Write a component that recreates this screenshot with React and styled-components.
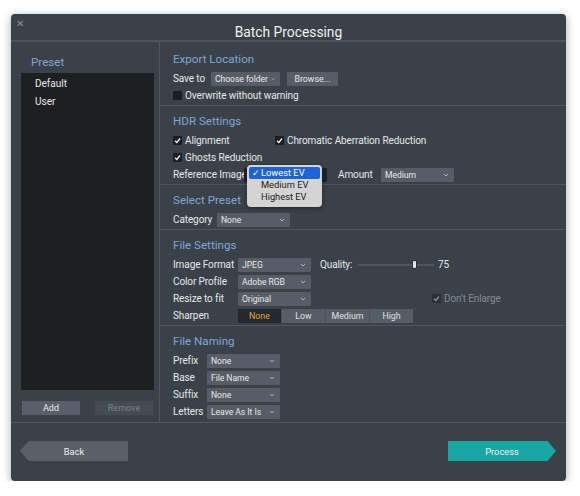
import React from 'react';
import styled, { createGlobalStyle } from 'styled-components';

const GlobalStyle = createGlobalStyle`
    body {
        margin: 0;
        background: #ffffff;
        font-family: Roboto, "Liberation Sans", sans-serif;
    }
`;

const Window = styled.div`
    margin: 14px 0 0 11px;
    width: 555px;
    height: 467px;
    background-color: #3b4149;
    border-radius: 4px;
    box-shadow: 0 2px 8px rgba(0, 0, 0, 0.35);
    display: flex;
    flex-direction: column;
    position: relative;
    overflow: hidden;
    color: #e4e6e8;
`;

const TitleBar = styled.div`
    height: 28px;
    border-bottom: 2px solid #4e545c;
    display: flex;
    align-items: center;
    justify-content: center;
    position: relative;
    padding-top: 9px;
    box-sizing: border-box;
    font-size: 13.8px;
    color: #f0f0f0;
`;

const CloseX = styled.span`
    position: absolute;
    left: 5px;
    top: 4px;
    font-size: 10px;
    color: #8d9299;
`;

const Body = styled.div`
    height: 380px;
    display: flex;
    border-bottom: 1px solid #50565e;
`;

const LeftPanel = styled.div`
    width: 149px;
    border-right: 1px solid #50565e;
    padding: 12px 5px 0 10px;
    display: flex;
    flex-direction: column;
    box-sizing: border-box;
`;

const SectionTitle = styled.div`
    font-size: 11.6px;
    line-height: 16px;
    color: #7fa7d6;
    margin: 0 0 ${p => p.$mb || 3}px ${p => p.$ml || 0}px;
`;

const PresetList = styled.ul`
    list-style: none;
    margin: 0;
    padding: 1px 0 0;
    height: 316px;
    background-color: #1e1f21;
`;

const PresetItem = styled.li`
    height: 18px;
    line-height: 19px;
    padding-left: 14px;
    font-size: 10px;
    color: #e8e8e8;
`;

const ListButtons = styled.div`
    display: flex;
    justify-content: space-between;
    padding: 11px 1px 0 1px;
`;

const FlatButton = styled.button`
    width: 58px;
    height: 14px;
    border: none;
    padding: 0;
    font-family: inherit;
    font-size: 9px;
    background-color: ${p => (p.$disabled ? '#454b53' : '#59606a')};
    color: ${p => (p.$disabled ? '#7d838a' : '#e8e8e8')};
`;

const RightPanel = styled.div`
    flex: 1;
    display: flex;
    flex-direction: column;
    padding-top: 2px;
`;

const Section = styled.div`
    padding: 7px 12px 1px 13px;
    border-bottom: ${p => (p.$last ? 'none' : '1px solid #50565e')};
    position: relative;
`;

const Row = styled.div`
    height: 17px;
    display: flex;
    align-items: center;
    font-size: 10px;
    letter-spacing: -0.1px;
    color: #e6e8ea;
    white-space: nowrap;
`;

const Label = styled.span`
    width: ${p => p.$w}px;
    margin-left: ${p => p.$ml || 0}px;
    flex-shrink: 0;
    white-space: nowrap;
`;

const SelectBox = styled.div`
    width: ${p => p.$w || 73}px;
    height: 14px;
    box-sizing: border-box;
    background-color: ${p => (p.$dark ? '#1f2328' : '#575d66')};
    border-radius: 1px;
    display: flex;
    align-items: center;
    justify-content: space-between;
    gap: 3px;
    padding: 0 5px 0 4px;
    font-size: 8.6px;
    letter-spacing: -0.05px;
    color: #e8e8e8;
    white-space: nowrap;
    flex-shrink: 0;
`;

const Chevron = () => (
    <svg width="6" height="4" viewBox="0 0 6 4">
        <path d="M1 1 L3 3 L5 1" fill="none" stroke="#b9bdc2" strokeWidth="0.9" />
    </svg>
);

const Select = ({ value, w, dark }) => (
    <SelectBox $w={w} $dark={dark}>
        <span>{value}</span>
        <Chevron />
    </SelectBox>
);

const Button = styled.div`
    width: 51px;
    height: 14px;
    margin-left: 7px;
    background-color: #575d66;
    display: flex;
    align-items: center;
    justify-content: center;
    font-size: 8.8px;
    letter-spacing: 0;
    color: #e8e8e8;
`;

const CheckWrap = styled.span`
    display: inline-flex;
    align-items: center;
    gap: 3px;
    color: ${p => (p.$dim ? '#868b92' : 'inherit')};
    margin-left: ${p => p.$ml || 0}px;
    width: ${p => (p.$w ? `${p.$w}px` : 'auto')};
`;

const Box = styled.span`
    width: 9px;
    height: 9px;
    background-color: ${p => (p.$dim ? '#2c3036' : '#1c1d20')};
    border-radius: 1px;
    display: inline-flex;
    align-items: center;
    justify-content: center;
`;

const Check = ({ checked, dim, children, ml, w }) => (
    <CheckWrap $dim={dim} $ml={ml} $w={w}>
        <Box $dim={dim}>
            {checked && (
                <svg width="7" height="7" viewBox="0 0 7 7">
                    <path d="M1 3.8 L2.8 5.5 L6 1.5" fill="none" stroke={dim ? '#8a8f96' : '#f2f2f2'} strokeWidth="1.3" />
                </svg>
            )}
        </Box>
        {children}
    </CheckWrap>
);

const RefSelectHolder = styled.div`
    position: relative;
`;

const Popup = styled.div`
    position: absolute;
    left: 3px;
    top: -3px;
    width: 75px;
    height: 42px;
    box-sizing: border-box;
    padding: 2px 2px;
    background-color: #d4d4d5;
    border-radius: 4px;
    box-shadow: 0 1px 4px rgba(0, 0, 0, 0.45);
    z-index: 2;
`;

const PopupItem = styled.div`
    height: 12px;
    line-height: 12px;
    font-size: 9.3px;
    letter-spacing: 0;
    padding-left: 12px;
    position: relative;
    border-radius: 2px;
    color: ${p => (p.$active ? '#ffffff' : '#1a1a1a')};
    background-color: ${p => (p.$active ? '#1d62d6' : 'transparent')};
`;

const Tick = styled.span`
    position: absolute;
    left: 3px;
    top: 0;
    font-size: 9px;
`;

const Slider = styled.div`
    width: 76px;
    height: 9px;
    margin: 0 4px 0 18px;
    position: relative;
    display: flex;
    align-items: center;
`;

const Track = styled.div`
    width: 100%;
    height: 2px;
    background-color: #50565e;
`;

const Thumb = styled.div`
    position: absolute;
    left: 54px;
    top: 0;
    width: 5px;
    height: 9px;
    border-radius: 2px;
    background-color: #e8e8e8;
    border: 1px solid #2a2d31;
    box-sizing: border-box;
`;

const Segmented = styled.div`
    display: flex;
    height: 14px;
`;

const Segment = styled.div`
    width: 43px;
    display: flex;
    align-items: center;
    justify-content: center;
    font-size: 8.8px;
    letter-spacing: 0;
    background-color: ${p => (p.$active ? '#24282d' : '#575d66')};
    color: ${p => (p.$active ? '#e9a53a' : '#dfe1e3')};
    border-left: ${p => (p.$first ? 'none' : '1px solid #4a5058')};
`;

const Footer = styled.div`
    flex: 1;
    display: flex;
    align-items: center;
    justify-content: space-between;
    padding: 0 10px 2px 9px;
`;

const ArrowButton = styled.div`
    width: 108px;
    height: 20px;
    display: flex;
    align-items: center;
    justify-content: center;
    font-size: 9.3px;
    color: #eef0f0;
    background-color: ${p => (p.$primary ? '#17a8a4' : '#5a6068')};
    clip-path: ${p =>
        p.$primary
            ? 'polygon(0 0, 92% 0, 100% 50%, 92% 100%, 0 100%)'
            : 'polygon(8% 0, 100% 0, 100% 100%, 8% 100%, 0 50%)'};
`;

export default function App() {
    return (
        <>
            <GlobalStyle />
            <Window>
                <TitleBar>
                    <CloseX>✕</CloseX>
                    Batch Processing
                </TitleBar>
                <Body>
                    <LeftPanel>
                        <SectionTitle $ml={10} $mb={3}>Preset</SectionTitle>
                        <PresetList>
                            <PresetItem>Default</PresetItem>
                            <PresetItem>User</PresetItem>
                        </PresetList>
                        <ListButtons>
                            <FlatButton>Add</FlatButton>
                            <FlatButton $disabled>Remove</FlatButton>
                        </ListButtons>
                    </LeftPanel>
                    <RightPanel>
                        <Section>
                            <SectionTitle>Export Location</SectionTitle>
                            <Row>
                                <Label $w={38}>Save to</Label>
                                <Select value="Choose folder" w={69} />
                                <Button>Browse...</Button>
                            </Row>
                            <Row>
                                <Check>Overwrite without warning</Check>
                            </Row>
                        </Section>
                        <Section>
                            <SectionTitle>HDR Settings</SectionTitle>
                            <Row>
                                <Check checked w={102}>Alignment</Check>
                                <Check checked>Chromatic Aberration Reduction</Check>
                            </Row>
                            <Row>
                                <Check checked>Ghosts Reduction</Check>
                            </Row>
                            <Row>
                                <Label $w={71}>Reference Image</Label>
                                <RefSelectHolder>
                                    <Select value="" w={83} dark />
                                    <Popup>
                                        <PopupItem $active><Tick>✓</Tick>Lowest EV</PopupItem>
                                        <PopupItem>Medium EV</PopupItem>
                                        <PopupItem>Highest EV</PopupItem>
                                    </Popup>
                                </RefSelectHolder>
                                <Label $w={43} $ml={11}>Amount</Label>
                                <Select value="Medium" />
                            </Row>
                        </Section>
                        <Section>
                            <SectionTitle>Select Preset</SectionTitle>
                            <Row>
                                <Label $w={44}>Category</Label>
                                <Select value="None" />
                            </Row>
                        </Section>
                        <Section>
                            <SectionTitle>File Settings</SectionTitle>
                            <Row>
                                <Label $w={65}>Image Format</Label>
                                <Select value="JPEG" />
                                <Label $w={20} $ml={9}>Quality:</Label>
                                <Slider>
                                    <Track />
                                    <Thumb />
                                </Slider>
                                <span>75</span>
                            </Row>
                            <Row>
                                <Label $w={65}>Color Profile</Label>
                                <Select value="Adobe RGB" />
                            </Row>
                            <Row>
                                <Label $w={65}>Resize to fit</Label>
                                <Select value="Original" />
                                <Check checked dim ml={121}>Don't Enlarge</Check>
                            </Row>
                            <Row>
                                <Label $w={65}>Sharpen</Label>
                                <Segmented>
                                    <Segment $active $first>None</Segment>
                                    <Segment>Low</Segment>
                                    <Segment>Medium</Segment>
                                    <Segment>High</Segment>
                                </Segmented>
                            </Row>
                        </Section>
                        <Section $last>
                            <SectionTitle>File Naming</SectionTitle>
                            <Row>
                                <Label $w={34}>Prefix</Label>
                                <Select value="None" />
                            </Row>
                            <Row>
                                <Label $w={34}>Base</Label>
                                <Select value="File Name" />
                            </Row>
                            <Row>
                                <Label $w={34}>Suffix</Label>
                                <Select value="None" />
                            </Row>
                            <Row>
                                <Label $w={34}>Letters</Label>
                                <Select value="Leave As It Is" />
                            </Row>
                        </Section>
                    </RightPanel>
                </Body>
                <Footer>
                    <ArrowButton>Back</ArrowButton>
                    <ArrowButton $primary>Process</ArrowButton>
                </Footer>
            </Window>
        </>
    );
}
